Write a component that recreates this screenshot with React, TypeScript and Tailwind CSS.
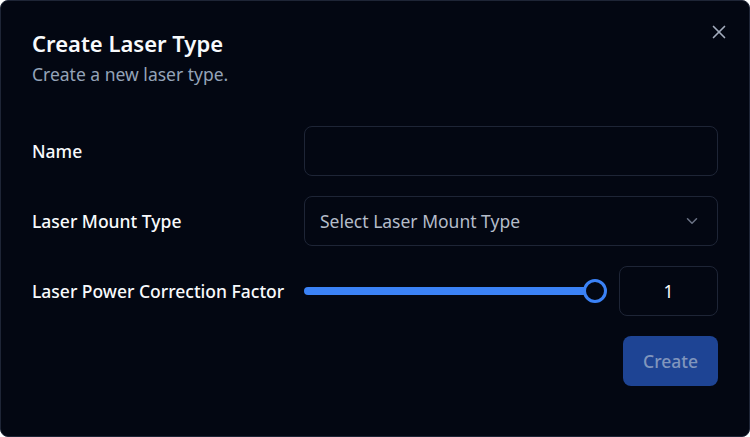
import React, { useState } from 'react';
import { X, ChevronDown } from 'lucide-react';

export default function App() {
  const [name, setName] = useState('');
  const [factor, setFactor] = useState(1);

  return (
    <div className="w-[750px] h-[437px] bg-white">
      <div
        className="relative w-full h-full rounded-lg border border-[#1e2536] bg-[#030712] px-[31px] pt-[27px] text-[#f8fafc]"
        style={{ fontFamily: '"Noto Sans", "Open Sans", sans-serif' }}
      >
        {/* Close */}
        <button className="absolute right-[19px] top-[20px] text-[#a3acbd] cursor-pointer">
          <X className="w-[22px] h-[22px]" strokeWidth={1.8} />
        </button>

        {/* Header */}
        <div className="space-y-[3px]">
          <h2 className="text-[22px] leading-[30px] font-semibold">Create Laser Type</h2>
          <p className="text-[17.5px] leading-[26px] text-[#94a3b8]">Create a new laser type.</p>
        </div>

        {/* Form */}
        <div className="mt-[39px] grid grid-cols-[272px_1fr] gap-y-5 items-center">
          <label className="text-[17.5px] font-medium">Name</label>
          <input
            value={name}
            onChange={(e) => setName(e.target.value)}
            className="h-[50px] w-full rounded-lg border border-[#1e2536] bg-transparent px-[15px] text-[17.5px] outline-none"
          />

          <label className="text-[17.5px] font-medium">Laser Mount Type</label>
          <button className="h-[50px] w-full rounded-lg border border-[#1e2536] bg-transparent pl-[15px] pr-[16px] flex items-center justify-between text-[17.5px] text-[#b4bcc9]">
            <span>Select Laser Mount Type</span>
            <ChevronDown className="w-[18px] h-[18px] text-[#6b7385]" />
          </button>

          <label className="text-[17.5px] font-medium">Laser Power Correction Factor</label>
          <div className="flex items-center gap-3">
            <div className="relative flex-1 h-6 flex items-center">
              <div className="h-2 w-full rounded-full bg-[#3b82f6] mr-3" />
              <div className="absolute right-0 top-0 w-6 h-6 rounded-full border-[3px] border-[#3b82f6] bg-[#030712]" />
            </div>
            <input
              value={factor}
              onChange={(e) => setFactor(Number(e.target.value))}
              className="h-[50px] w-[99px] rounded-lg border border-[#1e2536] bg-transparent text-center text-[17.5px] outline-none"
            />
          </div>
        </div>

        {/* Footer */}
        <div className="mt-5 flex justify-end">
          <button className="h-[50px] px-[20px] rounded-lg bg-[#1e4494] text-[17.5px] font-medium text-[#8196bd]">
            Create
          </button>
        </div>
      </div>
    </div>
  );
}
